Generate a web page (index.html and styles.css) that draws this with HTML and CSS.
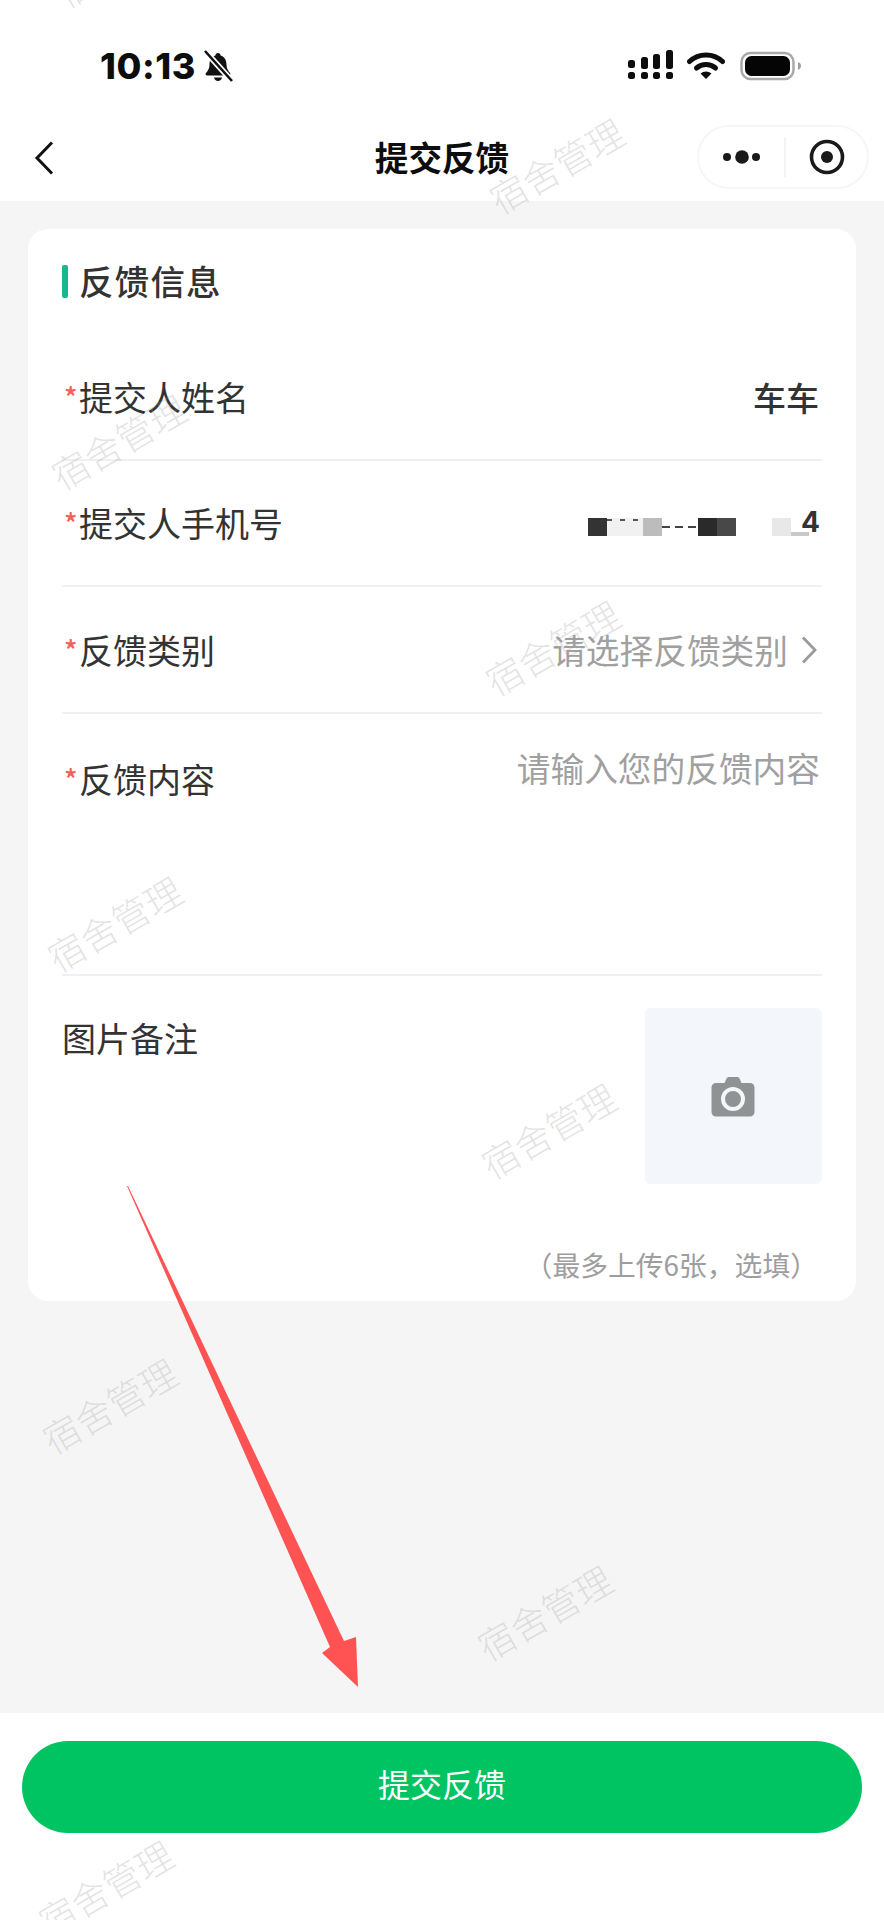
FILE: index.html
```html
<!DOCTYPE html>
<html lang="zh-CN">
<head>
<meta charset="utf-8">
<title>提交反馈</title>
<link rel="stylesheet" href="styles.css">
</head>
<body>
<div class="page">
  <header class="top">
    <div class="status">
      <div class="status-left">
        <span class="time">10:13</span>
        <svg class="bell" viewBox="0 0 30 32" width="30" height="32">
          <path d="M15 3c-1.600 0-2.400 1-2.600 2.400C8.500 6.600 6.500 10 6.500 14.500c0 4-1.500 6-3.500 8.500-.8 1-.3 2.500 1.200 2.500h21.600c1.500 0 2-1.500 1.200-2.500-2-2.500-3.500-4.500-3.500-8.500C23.500 10 21.500 6.600 17.600 5.400 17.400 4 16.600 3 15 3z" fill="#111"/>
          <path d="M11 27.500h8c-.4 2-2 3.500-4 3.500s-3.600-1.500-4-3.500z" fill="#111"/>
          <path d="M1 0 29 31" stroke="#fff" stroke-width="6"/>
          <path d="M2 1 29 31" stroke="#111" stroke-width="2.600"/>
        </svg>
      </div>
      <div class="status-right">
        <svg class="signal" viewBox="0 0 46 30" width="46" height="30">
          <g fill="#0d0d0d">
            <rect x="0" y="10" width="7" height="8" rx="2.500"/>
            <rect x="13" y="7" width="7" height="12" rx="2.500"/>
            <rect x="25" y="4" width="7" height="15" rx="2.500"/>
            <rect x="38" y="0" width="7" height="19" rx="2.500"/>
            <rect x="0" y="22" width="7" height="7" rx="2.500"/>
            <rect x="13" y="22" width="7" height="7" rx="2.500"/>
            <rect x="25" y="22" width="7" height="7" rx="2.500"/>
            <rect x="38" y="22" width="7" height="7" rx="2.500"/>
          </g>
        </svg>
        <svg class="wifi" viewBox="0 0 38 28" width="38" height="28">
          <path d="M2.500 10.500a24 24 0 0 1 33 0" fill="none" stroke="#0d0d0d" stroke-width="5" stroke-linecap="round"/>
          <path d="M9.500 17a14.500 14.500 0 0 1 19 0" fill="none" stroke="#0d0d0d" stroke-width="5" stroke-linecap="round"/>
          <path d="M13.500 22.500a8.500 8.500 0 0 1 11 0L19 28z" fill="#0d0d0d"/>
        </svg>
        <svg class="battery" viewBox="0 0 62 30" width="62" height="30">
          <rect x="1.500" y="2" width="52" height="26" rx="9" fill="none" stroke="#a9a9a9" stroke-width="2.500"/>
          <rect x="5" y="5" width="45" height="20" rx="6.500" fill="#050505"/>
          <path d="M58 11c2 .8 3 2.200 3 4s-1 3.200-3 4z" fill="#a0a0a0"/>
        </svg>
      </div>
    </div>
    <nav class="nav">
      <svg class="back" viewBox="0 0 20 34" width="20" height="34"><path d="M18 1.500 3 17l15 15.500" fill="none" stroke="#111" stroke-width="3"/></svg>
      <h1 class="nav-title">提交反馈</h1>
      <div class="capsule">
        <svg class="capsule-dots" viewBox="0 0 40 16" width="40" height="16">
          <circle cx="5" cy="8" r="4" fill="#1a1a1a"/><circle cx="20" cy="8" r="6.800" fill="#1a1a1a"/><circle cx="34" cy="8" r="4" fill="#1a1a1a"/>
        </svg>
        <span class="capsule-line"></span>
        <svg class="capsule-target" viewBox="0 0 36 36" width="36" height="36">
          <circle cx="18" cy="18" r="15.500" fill="none" stroke="#1a1a1a" stroke-width="3.600"/><circle cx="18" cy="18" r="6" fill="#1a1a1a"/>
        </svg>
      </div>
    </nav>
  </header>

  <main class="content">
    <section class="card">
      <h2 class="card-title">反馈信息</h2>
      <div class="row row-line">
        <span class="label"><i class="req">*</i>提交人姓名</span>
        <span class="value">车车</span>
      </div>
      <div class="row row-line">
        <span class="label"><i class="req">*</i>提交人手机号</span>
        <span class="phone">
          <b class="blk b1"></b><b class="blk b2"></b><b class="blk b3"></b><b class="gap"></b><b class="blk b4"></b><b class="blk b5"></b><b class="gap2"></b><b class="blk b6"></b><b class="blk b7"></b><em class="last">4</em>
        </span>
      </div>
      <div class="row row-line">
        <span class="label"><i class="req">*</i>反馈类别</span>
        <span class="placeholder pick">请选择反馈类别
          <svg class="chev" viewBox="0 0 16 28" width="16" height="28"><path d="M2 1.500 14 14 2 26.500" fill="none" stroke="#9a9a9a" stroke-width="2.800"/></svg>
        </span>
      </div>
      <div class="row-area row-line">
        <span class="label"><i class="req">*</i>反馈内容</span>
        <span class="placeholder">请输入您的反馈内容</span>
      </div>
      <div class="row-photo">
        <span class="label plain">图片备注</span>
        <div class="upload">
          <svg viewBox="0 0 44 41" width="44" height="41">
            <path d="M5 7h8.500l2-4.500C16 1.500 17 1 18 1h8c1 0 2 .5 2.500 1.500l2 4.500H39c2.500 0 4.500 2 4.500 4.500V36c0 2.500-2 4.500-4.500 4.500H5C2.500 40.500.5 38.500.5 36V11.500C.5 9 2.500 7 5 7z" fill="#8f9393"/>
            <circle cx="22" cy="23" r="10" fill="none" stroke="#f3f6fa" stroke-width="4"/>
          </svg>
        </div>
      </div>
      <p class="hint">（最多上传6张，选填）</p>
    </section>
  </main>

  <footer class="bottom">
    <button class="submit" type="button">提交反馈</button>
  </footer>

  <svg class="arrow" viewBox="0 0 884 1920" width="884" height="1920">
    <polygon points="127,1186 128,1186 344,1641 356,1637 358,1687 322,1653 330,1647" fill="#ff5252"/>
  </svg>

  <div class="marks">
    <span class="wm w1">宿舍管理</span>
    <span class="wm w2">宿舍管理</span>
    <span class="wm w3">宿舍管理</span>
    <span class="wm w4">宿舍管理</span>
    <span class="wm w5">宿舍管理</span>
    <span class="wm w6">宿舍管理</span>
    <span class="wm w7">宿舍管理</span>
    <span class="wm w8">宿舍管理</span>
    <span class="wm w9">宿舍管理</span>
  </div>
</div>
</body>
</html>
```
FILE: styles.css
```css
* { box-sizing: border-box; }
html, body { margin: 0; padding: 0; }
body {
  width: 884px;
  height: 1920px;
  overflow: hidden;
  background: #fff;
  font-family: "Noto Sans CJK SC", "Noto Sans", sans-serif;
  color: #333;
}
.page {
  position: relative;
  width: 884px;
  height: 1920px;
  display: flex;
  flex-direction: column;
  overflow: hidden;
  background: #f5f5f5;
}
.top { background: #fff; height: 201px; flex: none; }
.status {
  height: 115px;
  padding: 50px 82px 0 100px;
  display: flex;
  justify-content: space-between;
  align-items: flex-start;
}
.status-left { display: flex; align-items: center; gap: 7px; height: 32px; }
.time {
  font-family: Inter, "Liberation Sans", sans-serif;
  font-weight: 800;
  font-size: 36px;
  line-height: 32px;
  color: #0d0d0d;
  letter-spacing: 0.6px;
}
.status-right { display: flex; align-items: flex-start; margin-left: auto; }
.wifi { margin: 1px 0 0 13px; }
.battery { margin: 1px 0 0 15px; }
.nav {
  position: relative;
  height: 86px;
  padding: 10px 15px 0 34px;
  display: flex;
  align-items: flex-start;
  justify-content: space-between;
}
.back { margin-top: 16px; }
.nav-title {
  position: absolute;
  left: 0;
  right: 0;
  top: 18px;
  margin: 0;
  text-align: center;
  font-size: 33.6px;
  line-height: 48px;
  font-weight: 700;
  color: #0d0d0d;
}
.capsule {
  width: 172px;
  height: 64px;
  border: 2px solid #f6f6f6;
  border-radius: 32px;
  display: flex;
  align-items: center;
  background: #fff;
  position: relative;
}
.capsule-dots { margin-left: 23px; }
.capsule-line { width: 2px; height: 40px; background: #f3f3f3; margin-left: 22px; }
.capsule-target { margin-left: 23px; }

.content { flex: 1; padding: 28px 28px 0; }
.card {
  background: #fff;
  border-radius: 20px;
  height: 1072px;
  padding: 0 34px;
}
.card-title {
  margin: 0;
  height: 105px;
  padding: 34px 0 0 17px;
  font-size: 34.5px;
  line-height: 34px;
  font-weight: 500;
  color: #333;
  position: relative;
  letter-spacing: 1.2px;
}
.card-title::before {
  content: "";
  position: absolute;
  left: 0;
  top: 36px;
  width: 6px;
  height: 33px;
  border-radius: 2px;
  background: #17b88e;
}
.row {
  display: flex;
  justify-content: space-between;
  align-items: center;
  height: 127px;
}
.row-line { border-bottom: 2px solid #f0f0f4; }
.row:nth-of-type(2) { height: 126px; }
.label { font-size: 34px; line-height: 48px; color: #333; position: relative; padding-left: 17px; }
.label.plain { padding-left: 0; }
.req {
  position: absolute;
  left: 2px;
  top: -1px;
  font-style: normal;
  font-weight: 500;
  color: #f4615a;
  font-size: 28px;
  line-height: 48px;
}
.value { font-size: 33px; font-weight: 500; color: #333; margin-right: 3px; line-height: 48px; }
.placeholder { font-size: 33.7px; line-height: 48px; color: #a0a0a0; }
.pick { display: flex; align-items: center; gap: 14px; margin-right: 5px; margin-top: 1px; }
.pick .chev { margin-left: -1px; }
.phone { display: flex; align-items: center; height: 40px; margin: 8px 2px 0 0; }
.blk { display: block; height: 18px; width: 19px; flex: none; }
.b1 { background: #333; }
.b2 {
  width: 36px;
  background:
    repeating-linear-gradient(90deg, #555 0 5px, transparent 5px 13px) 0 1px / 100% 2px no-repeat,
    #f1f1f1;
}
.b3 { background: #bcbcbc; }
.gap {
  display: block;
  width: 36px;
  height: 2px;
  flex: none;
  background: repeating-linear-gradient(90deg, #444 0 8px, #fff 8px 13px);
}
.b4 { background: #2a2a2a; }
.b5 { background: #484848; }
.gap2 { display: block; width: 36px; flex: none; }
.b6 { background: #e8e8e8; }
.b7 { width: 18px; background: linear-gradient(transparent 14px, #c8c8c8 14px); }
.last {
  font-family: Inter, "Liberation Sans", sans-serif;
  font-style: normal;
  font-weight: 700;
  font-size: 28px;
  line-height: 28px;
  color: #333;
  position: relative;
  margin: -10px 0 0 -9px;
  width: 20px;
  text-align: right;
}
.row-area {
  height: 262px;
  display: flex;
  justify-content: space-between;
  align-items: flex-start;
  padding-top: 41px;
}
.row-area .placeholder { margin-top: -11px; margin-right: 2px; }
.row-photo {
  display: flex;
  justify-content: space-between;
  align-items: flex-start;
  padding-top: 32px;
}
.row-photo .label { margin-top: 6px; }
.upload {
  width: 177px;
  height: 176px;
  background: #f3f6fa;
  border-radius: 6px;
  display: flex;
  align-items: center;
  justify-content: center;
  padding-right: 1px;
}
.hint {
  margin: 60px 4px 0 0;
  text-align: right;
  font-size: 27.8px;
  line-height: 40px;
  color: #9e9e9e;
}
.bottom {
  height: 207px;
  flex: none;
  background: #fff;
  padding: 28px 22px 0;
}
.submit {
  display: block;
  width: 840px;
  height: 92px;
  border: 0;
  border-radius: 46px;
  background: #00c462;
  color: #fff;
  font-family: inherit;
  font-size: 32px;
  line-height: 44px;
  padding: 0 0 8px;
}
.arrow { position: absolute; left: 0; top: 0; pointer-events: none; }
.marks { position: absolute; inset: 0; pointer-events: none; }
.wm {
  position: absolute;
  width: 160px;
  height: 40px;
  margin: -20px 0 0 -82px;
  text-align: center;
  font-size: 37px;
  line-height: 40px;
  font-weight: 300;
  color: rgba(150, 150, 150, 0.26);
  transform: rotate(-30deg);
  white-space: nowrap;
}
.w1 { left: 124px; top: -41px; }
.w2 { left: 558px; top: 165px; }
.w3 { left: 120px; top: 441px; }
.w4 { left: 554px; top: 647px; }
.w5 { left: 116px; top: 923px; }
.w6 { left: 550px; top: 1130px; }
.w7 { left: 111px; top: 1405px; }
.w8 { left: 546px; top: 1612px; }
.w9 { left: 107px; top: 1887px; }
```
